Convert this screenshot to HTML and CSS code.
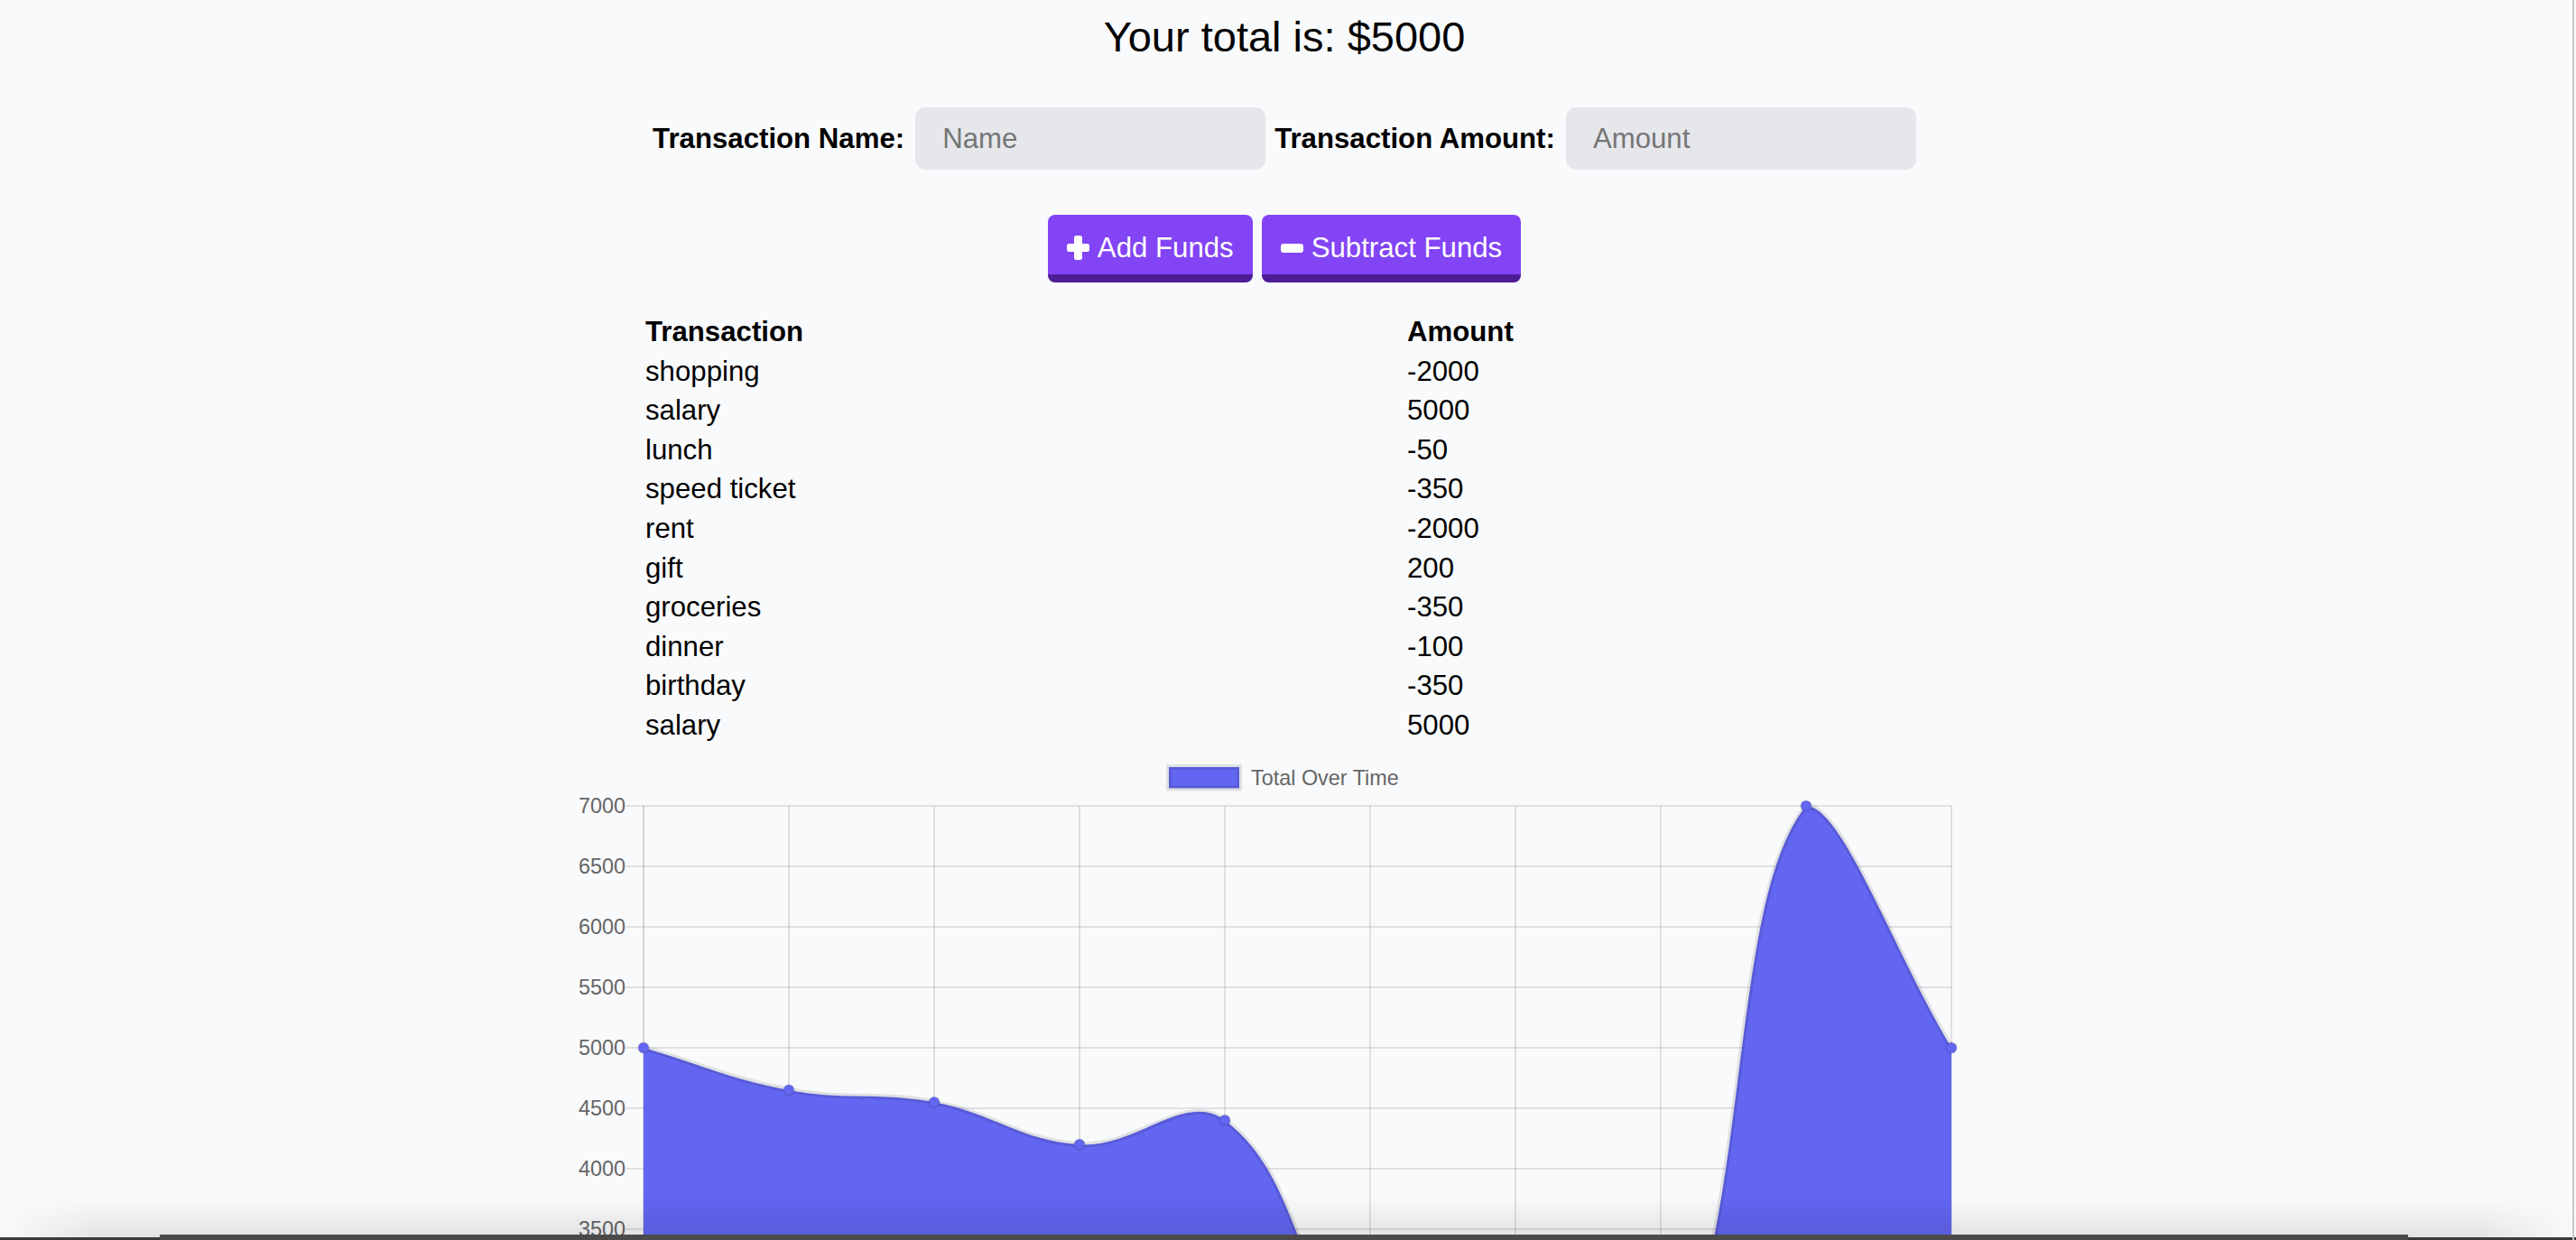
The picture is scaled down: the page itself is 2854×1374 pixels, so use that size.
FILE: index.html
```html
<!DOCTYPE html>
<html lang="en">
<head>
<meta charset="utf-8">
<title>Budget Tracker</title>
<link rel="stylesheet" href="styles.css">
</head>
<body>
<main class="page">
  <h1 class="total">Your total is: $5000</h1>

  <form class="entry">
    <label class="field-label" for="t-name">Transaction Name:</label>
    <input id="t-name" class="field" type="text" placeholder="Name">
    <label class="field-label" for="t-amount">Transaction Amount:</label>
    <input id="t-amount" class="field" type="number" placeholder="Amount">
  </form>

  <div class="actions">
    <button class="btn" type="button">
      <svg class="ico-plus" viewBox="0 0 25 27" aria-hidden="true"><rect x="8" y="0" width="9" height="27" rx="2.5"/><rect x="0" y="9" width="25" height="9" rx="2.5"/></svg>
      <span>Add Funds</span>
    </button>
    <button class="btn" type="button">
      <svg class="ico-minus" viewBox="0 0 25 10" aria-hidden="true"><rect x="0" y="0" width="25" height="10" rx="3"/></svg>
      <span>Subtract Funds</span>
    </button>
  </div>

  <section class="report">
    <table class="ledger">
      <thead>
        <tr><th class="col-name">Transaction</th><th>Amount</th></tr>
      </thead>
      <tbody>
        <tr><td>shopping</td><td>-2000</td></tr>
        <tr><td>salary</td><td>5000</td></tr>
        <tr><td>lunch</td><td>-50</td></tr>
        <tr><td>speed ticket</td><td>-350</td></tr>
        <tr><td>rent</td><td>-2000</td></tr>
        <tr><td>gift</td><td>200</td></tr>
        <tr><td>groceries</td><td>-350</td></tr>
        <tr><td>dinner</td><td>-100</td></tr>
        <tr><td>birthday</td><td>-350</td></tr>
        <tr><td>salary</td><td>5000</td></tr>
      </tbody>
    </table>

    <svg class="chart" viewBox="631 830 1584 544" aria-label="Total Over Time">
      <g class="legend">
        <rect class="legend-box" x="1295" y="850" width="78" height="23.4"/>
        <text class="legend-text" x="1386" y="869.7">Total Over Time</text>
      </g>
      <g class="grid">
        <line x1="693.5" y1="893" x2="2162" y2="893"/>
        <line x1="693.5" y1="960" x2="2162" y2="960"/>
        <line x1="693.5" y1="1027" x2="2162" y2="1027"/>
        <line x1="693.5" y1="1094" x2="2162" y2="1094"/>
        <line x1="693.5" y1="1161" x2="2162" y2="1161"/>
        <line x1="693.5" y1="1228" x2="2162" y2="1228"/>
        <line x1="693.5" y1="1295" x2="2162" y2="1295"/>
        <line x1="693.5" y1="1362" x2="2162" y2="1362"/>
        <line x1="693.5" y1="1429" x2="2162" y2="1429"/>
        <line x1="693.5" y1="1496" x2="2162" y2="1496"/>
        <line x1="693.5" y1="1563" x2="2162" y2="1563"/>
        <line class="zero" x1="713" y1="893" x2="713" y2="1582"/>
        <line x1="874" y1="893" x2="874" y2="1582"/>
        <line x1="1035" y1="893" x2="1035" y2="1582"/>
        <line x1="1196" y1="893" x2="1196" y2="1582"/>
        <line x1="1357" y1="893" x2="1357" y2="1582"/>
        <line x1="1518" y1="893" x2="1518" y2="1582"/>
        <line x1="1679" y1="893" x2="1679" y2="1582"/>
        <line x1="1840" y1="893" x2="1840" y2="1582"/>
        <line x1="2001" y1="893" x2="2001" y2="1582"/>
        <line x1="2162" y1="893" x2="2162" y2="1582"/>
      </g>
      <g class="axis-labels">
        <text x="693" y="901.2">7000</text>
        <text x="693" y="968.2">6500</text>
        <text x="693" y="1035.2">6000</text>
        <text x="693" y="1102.2">5500</text>
        <text x="693" y="1169.2">5000</text>
        <text x="693" y="1236.2">4500</text>
        <text x="693" y="1303.2">4000</text>
        <text x="693" y="1370.2">3500</text>
      </g>
      <path class="area" d="M713,1161 C777.4,1179.76 808.4,1195.62 874,1207.9 C937.2,1219.74 971.8,1209.46 1035,1221.3 C1100.6,1233.58 1130.73,1264.13 1196,1268.2 C1259.53,1272.17 1312.82,1208.31 1357,1241.4 C1441.62,1304.79 1434.15,1427.4 1518,1509.4 C1562.95,1553.36 1613.31,1545.37 1679,1556.3 C1742.11,1563 1815.59,1563 1840,1563 C1944.39,1347.96 1912.39,1003.63 2001,893 C2041.19,893 2097.6,1053.8 2162,1161 L2162,1563 L713,1563 Z"/>
      <path class="line" d="M713,1161 C777.4,1179.76 808.4,1195.62 874,1207.9 C937.2,1219.74 971.8,1209.46 1035,1221.3 C1100.6,1233.58 1130.73,1264.13 1196,1268.2 C1259.53,1272.17 1312.82,1208.31 1357,1241.4 C1441.62,1304.79 1434.15,1427.4 1518,1509.4 C1562.95,1553.36 1613.31,1545.37 1679,1556.3 C1742.11,1563 1815.59,1563 1840,1563 C1944.39,1347.96 1912.39,1003.63 2001,893 C2041.19,893 2097.6,1053.8 2162,1161"/>
      <g class="points">
        <circle cx="713" cy="1161" r="5.85"/>
        <circle cx="874" cy="1207.9" r="5.85"/>
        <circle cx="1035" cy="1221.3" r="5.85"/>
        <circle cx="1196" cy="1268.2" r="5.85"/>
        <circle cx="1357" cy="1241.4" r="5.85"/>
        <circle cx="1518" cy="1509.4" r="5.85"/>
        <circle cx="1679" cy="1556.3" r="5.85"/>
        <circle cx="1840" cy="1563" r="5.85"/>
        <circle cx="2001" cy="893" r="5.85"/>
        <circle cx="2162" cy="1161" r="5.85"/>
      </g>
    </svg>
  </section>
</main>

<div class="shade" aria-hidden="true"></div>
<div class="dock-edge" aria-hidden="true"></div>
<div class="dock-bar" aria-hidden="true"></div>
<div class="window-edge" aria-hidden="true"></div>
</body>
</html>
```

FILE: styles.css
```css
html {
  overflow: hidden;
  background: #f9fafb;
}

body {
  margin: 0;
  font-family: "Liberation Sans", Arial, Helvetica, sans-serif;
  font-size: 31.2px;
  color: #000;
}

.page {
  display: flex;
  flex-direction: column;
  align-items: center;
  padding-right: 8px;
}

.total {
  margin: 0;
  padding-top: 14px;
  font-size: 47px;
  line-height: 54px;
  font-weight: normal;
}

.entry {
  margin: 51px 0 0;
  display: flex;
  align-items: center;
  gap: 10px;
}

.field-label {
  font-weight: bold;
  line-height: 36px;
}

.field-label + .field {
  margin-left: 2px;
}

.field {
  width: 388px;
  height: 69px;
  box-sizing: border-box;
  border: 0;
  border-radius: 11px;
  background: #e5e7eb;
  padding: 0 30px;
  font: inherit;
  color: #000;
  outline: none;
}

.field::placeholder {
  color: #757575;
}

.actions {
  margin-top: 50px;
  display: flex;
  gap: 10px;
}

.btn {
  display: flex;
  align-items: center;
  gap: 9px;
  height: 75px;
  box-sizing: border-box;
  padding: 7px 21px 0;
  border: 0;
  border-bottom: 9px solid #4c1d95;
  border-radius: 8px;
  background: #8344f5;
  color: #fff;
  font: inherit;
  line-height: 59px;
  cursor: pointer;
}

.ico-plus {
  width: 25px;
  height: 27px;
  flex: none;
  fill: #fff;
}

.ico-minus {
  width: 25px;
  height: 10px;
  flex: none;
  fill: #fff;
}

.report {
  width: 1584px;
  margin-top: 33px;
}

.ledger {
  margin-left: 84px;
  border-collapse: collapse;
}

.ledger th,
.ledger td {
  padding: 0;
  line-height: 43.6px;
  text-align: left;
  vertical-align: top;
}

.ledger th {
  font-weight: bold;
}

.ledger .col-name {
  width: 844px;
}

.chart {
  display: block;
  margin-top: 4.4px;
  width: 1584px;
  height: 544px;
  font-family: "Liberation Sans", Arial, Helvetica, sans-serif;
}

.grid line {
  stroke: rgba(0, 0, 0, 0.1);
  stroke-width: 2;
}

.grid line.zero {
  stroke: rgba(0, 0, 0, 0.14);
}

.axis-labels text {
  font-size: 23.4px;
  fill: #666;
  text-anchor: end;
}

.legend-box {
  fill: #6366f1;
  stroke: rgba(0, 0, 0, 0.1);
  stroke-width: 5.85;
}

.legend-text {
  font-size: 23.4px;
  fill: #666;
}

.area {
  fill: #6366f1;
}

.line {
  fill: none;
  stroke: rgba(0, 0, 0, 0.1);
  stroke-width: 5.85;
}

.points circle {
  fill: #6366f1;
  stroke: rgba(0, 0, 0, 0.1);
  stroke-width: 1.95;
}

.shade {
  position: fixed;
  left: 0;
  right: 0;
  bottom: 0;
  height: 48px;
  background: linear-gradient(to bottom, rgba(0, 0, 0, 0), rgba(0, 0, 0, 0.1));
  -webkit-mask-image: linear-gradient(to right, transparent 0, #000 4%, #000 96%, transparent 100%);
  mask-image: linear-gradient(to right, transparent 0, #000 4%, #000 96%, transparent 100%);
  pointer-events: none;
}

.dock-edge {
  position: fixed;
  left: 0;
  right: 0;
  bottom: 0;
  height: 3px;
  background: #3a3a3a;
}

.dock-bar {
  position: fixed;
  left: 177px;
  width: 2491px;
  bottom: 0;
  height: 6px;
  background: #4a4a4a;
}

.window-edge {
  position: fixed;
  top: 0;
  bottom: 0;
  right: 2px;
  width: 2px;
  background: #c8c8c8;
}
```
